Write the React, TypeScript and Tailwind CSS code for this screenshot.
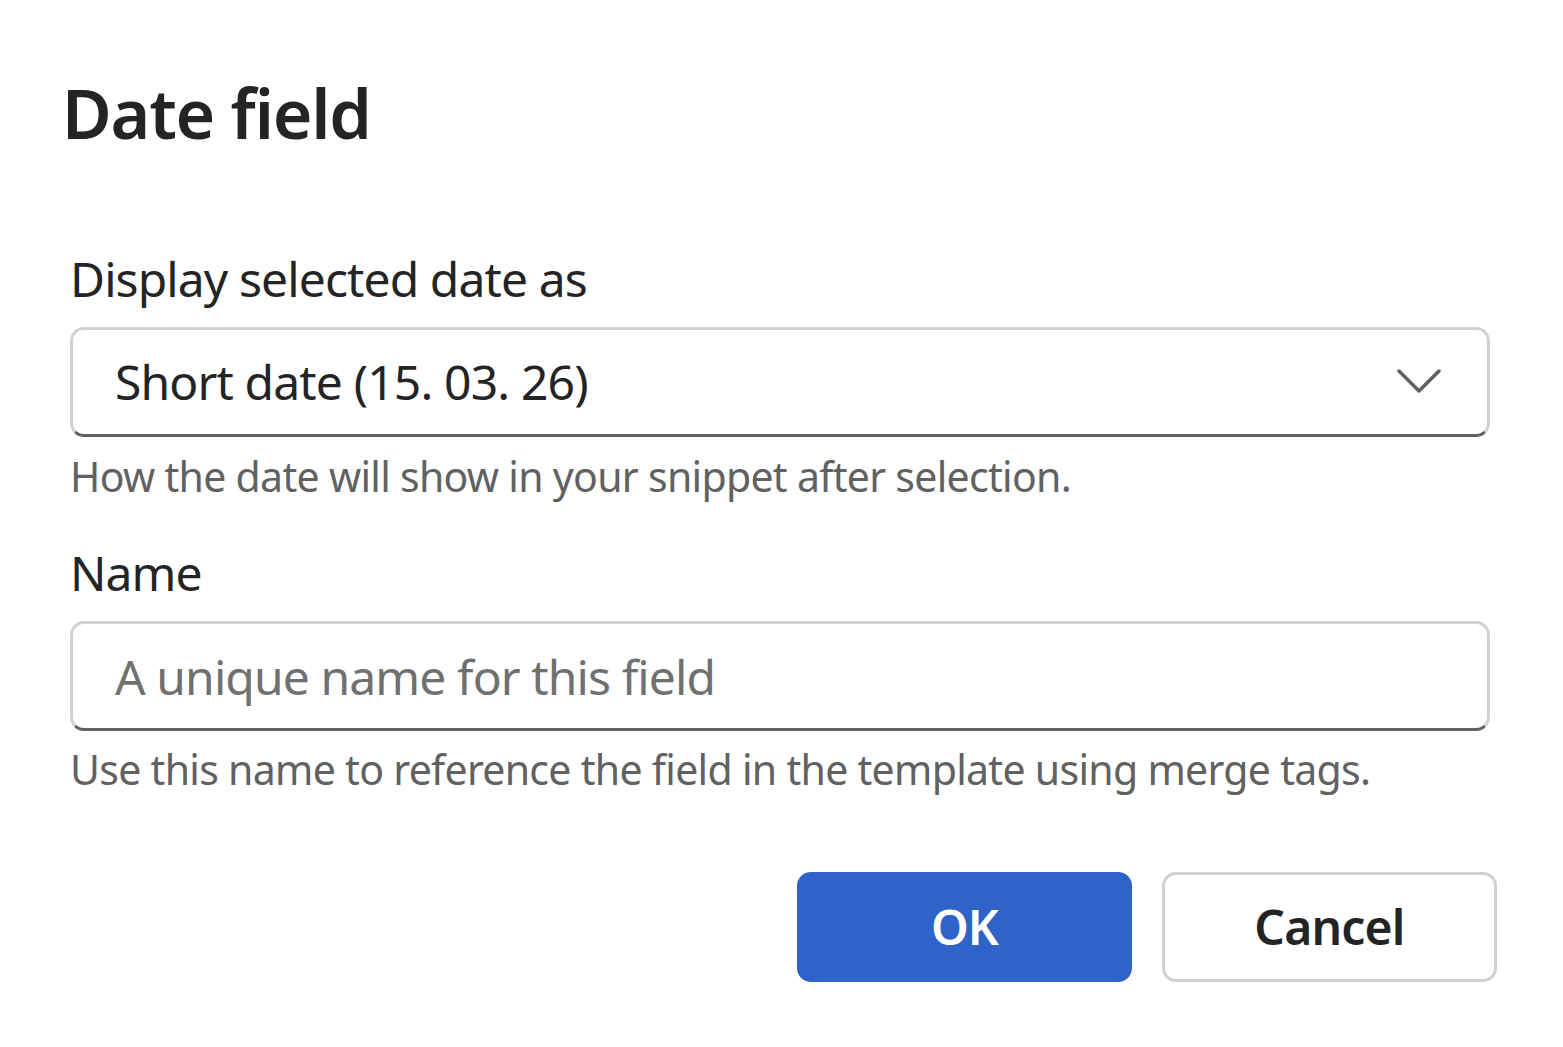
import { useState } from 'react';

const font = { fontFamily: '"Noto Sans", "Open Sans", sans-serif' };

function Chevron() {
  return (
    <svg width="44" height="26" viewBox="0 0 44 26" fill="none">
      <path d="M2 2 L22 22 L42 2" stroke="#616161" strokeWidth="3.5" strokeLinecap="round" strokeLinejoin="round" />
    </svg>
  );
}

export default function App() {
  const [name, setName] = useState('');

  return (
    <div className="min-h-screen w-full bg-white text-[#242424]" style={font}>
      <div className="pl-[62px] pr-[66px] pt-[68px]">
        <h1 className="text-[68px] leading-[90px] font-semibold tracking-[-1.2px]">Date field</h1>

        <div className="mt-[86px] pl-[8px] pr-[7px] flex flex-col">
          <label className="text-[48px] leading-[70px] tracking-[-0.9px]">Display selected date as</label>
          <button className="mt-[13px] h-[110px] w-full flex items-center justify-between rounded-[14px] border-[3px] border-[#d1d1d1] border-b-[#616161] pl-[42px] pr-[46px] text-left">
            <span className="text-[48px] tracking-[-0.85px]">Short date (15. 03. 26)</span>
            <Chevron />
          </button>
          <p className="mt-[11px] text-[41px] leading-[56px] tracking-[-0.7px] text-[#616161]">
            How the date will show in your snippet after selection.
          </p>

          <label className="mt-[34px] text-[48px] leading-[70px] tracking-[-0.9px]">Name</label>
          <input
            value={name}
            onChange={e => setName(e.target.value)}
            placeholder="A unique name for this field"
            className="mt-[13px] h-[110px] w-full rounded-[14px] border-[3px] border-[#d1d1d1] border-b-[#616161] pl-[42px] pr-[42px] text-[48px] tracking-[-0.9px] outline-none placeholder:text-[#707070]"
          />
          <p className="mt-[10px] text-[41px] leading-[56px] tracking-[-0.7px] text-[#616161]">
            Use this name to reference the field in the template using merge tags.
          </p>
        </div>

        <div className="mt-[75px] flex justify-end gap-[30px]">
          <button className="h-[110px] w-[335px] rounded-[14px] bg-[#2e63ca] text-[48px] font-semibold tracking-[-0.8px] text-white">
            OK
          </button>
          <button className="h-[110px] w-[335px] rounded-[14px] border-[3px] border-[#d1d1d1] bg-white text-[48px] font-semibold tracking-[-0.8px] text-[#242424]">
            Cancel
          </button>
        </div>
      </div>
    </div>
  );
}
